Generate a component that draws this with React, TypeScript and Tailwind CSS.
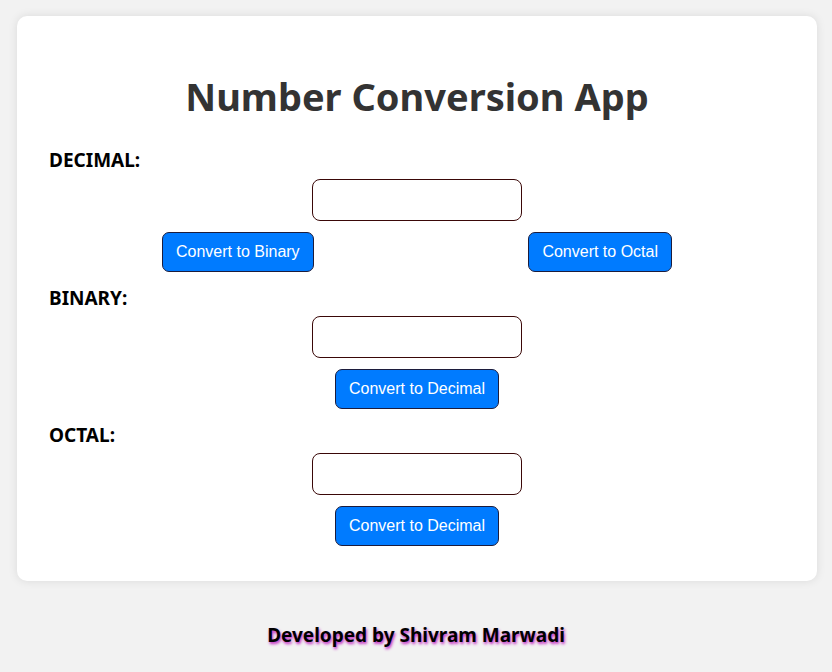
const segoe = "font-['Noto_Sans','Open_Sans',sans-serif]";

function ConvertButton({ label }: { label: string }) {
  return (
    <button className="h-10 rounded-[7px] border border-[#1c1c3c] bg-[#007bff] px-[13px] font-['Liberation_Sans',Arial,sans-serif] text-[16px] text-white">
      {label}
    </button>
  );
}

function NumberField() {
  return (
    <input
      type="text"
      className="h-[42px] w-[210px] rounded-lg border border-[#3a0808] bg-white px-2 text-base outline-none"
    />
  );
}

function SectionLabel({ text }: { text: string }) {
  return (
    <label className={`block h-6 text-[19px] font-bold leading-6 text-black ${segoe}`}>{text}</label>
  );
}

export default function App() {
  return (
    <div className="min-h-[672px] bg-[#f2f2f2] pt-4">
      <div className="ml-[17px] w-[800px] rounded-[10px] bg-white px-8 pb-[35px] pt-14 shadow-[0_0_10px_rgba(0,0,0,0.1)]">
        <h1 className={`h-12 text-center text-[38px] font-bold leading-[48px] text-[#333] ${segoe}`}>
          Number Conversion App
        </h1>

        <div className="mt-7">
          <SectionLabel text="DECIMAL:" />
          <div className="mt-[7px] flex justify-center">
            <NumberField />
          </div>
          <div className="mt-[11px] flex justify-between px-[113px]">
            <ConvertButton label="Convert to Binary" />
            <ConvertButton label="Convert to Octal" />
          </div>
        </div>

        <div className="mt-[14px]">
          <SectionLabel text="BINARY:" />
          <div className="mt-[6px] flex justify-center">
            <NumberField />
          </div>
          <div className="mt-[11px] flex justify-center">
            <ConvertButton label="Convert to Decimal" />
          </div>
        </div>

        <div className="mt-[14px]">
          <SectionLabel text="OCTAL:" />
          <div className="mt-[6px] flex justify-center">
            <NumberField />
          </div>
          <div className="mt-[11px] flex justify-center">
            <ConvertButton label="Convert to Decimal" />
          </div>
        </div>
      </div>

      <p
        className={`mt-[42px] text-center text-[19px] font-bold leading-6 text-black [text-shadow:1px_2px_3px_#c020c0] ${segoe}`}
      >
        Developed by Shivram Marwadi
      </p>
    </div>
  );
}
